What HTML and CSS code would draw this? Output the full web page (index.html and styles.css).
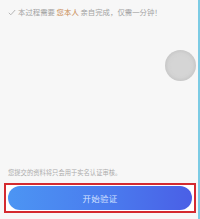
FILE: index.html
```html
<!DOCTYPE html>
<html lang="zh">
<head>
<meta charset="utf-8">
<link rel="stylesheet" href="styles.css">
</head>
<body>
<div class="page">
  <div class="notice">
    <svg class="check" width="8" height="7" viewBox="0 0 8 7"><polyline points="0.8,3.8 2.8,5.8 7.2,1" fill="none" stroke="#b5b5b5" stroke-width="1"/></svg>
    <span>本过程需要 <em class="who">您本人</em> 亲自完成，仅需一分钟！</span>
  </div>
  <div class="stage">
    <div class="float-btn"><div class="float-core"></div></div>
  </div>
  <div class="hint">您提交的资料将只会用于实名认证审核。</div>
  <div class="btn-frame">
    <button class="start">开始验证</button>
  </div>
</div>
</body>
</html>
```
FILE: styles.css
```css
html, body {
  margin: 0;
  padding: 0;
}
body {
  width: 200px;
  height: 219px;
  overflow: hidden;
  background: #f7f7f7;
  font-family: "Noto Sans CJK SC", "Noto Sans", sans-serif;
}
.page {
  box-sizing: border-box;
  width: 200px;
  height: 219px;
  display: flex;
  flex-direction: column;
  border-right: 2px solid #7ccbe4;
}
.notice {
  height: 20px;
  padding: 4px 0 0 8px;
  box-sizing: border-box;
  display: flex;
  align-items: center;
  align-self: flex-start;
  font-size: 7.4px;
  line-height: 10px;
  color: #a3a3a3;
}
.notice span { margin-left: 2px; }
.check { display: block; }
.who {
  font-style: normal;
  color: #c98c55;
}
.stage {
  flex: 1;
  display: flex;
  justify-content: flex-end;
  align-items: flex-start;
  padding: 30px 2px 0 0;
}
.float-btn {
  width: 31px;
  height: 31px;
  border-radius: 50%;
  background: radial-gradient(circle, #d8d8d8 0%, #d3d3d3 55%, #c3c3c3 78%, #cacaca 100%);
  display: flex;
  align-items: center;
  justify-content: center;
}
.float-core {
  width: 20px;
  height: 20px;
  border-radius: 50%;
  background: #d5d5d5;
}
.hint {
  height: 14px;
  line-height: 14px;
  padding-left: 8px;
  font-size: 6.3px;
  color: #acacac;
}
.btn-frame {
  margin: 3px 2px 6px 4px;
  border: 2px solid #d42a2f;
  padding: 1px 2px;
  background: #ffffff;
}
.start {
  display: block;
  width: 100%;
  height: 24px;
  border: none;
  border-radius: 12px;
  background: linear-gradient(90deg, #4c95f3 0%, #4a7bee 55%, #4a5fe6 100%);
  color: #d6e2ff;
  font-family: "Noto Sans CJK SC", "Noto Sans", sans-serif;
  font-size: 8.5px;
  letter-spacing: 0.3px;
  padding: 0;
}
```
